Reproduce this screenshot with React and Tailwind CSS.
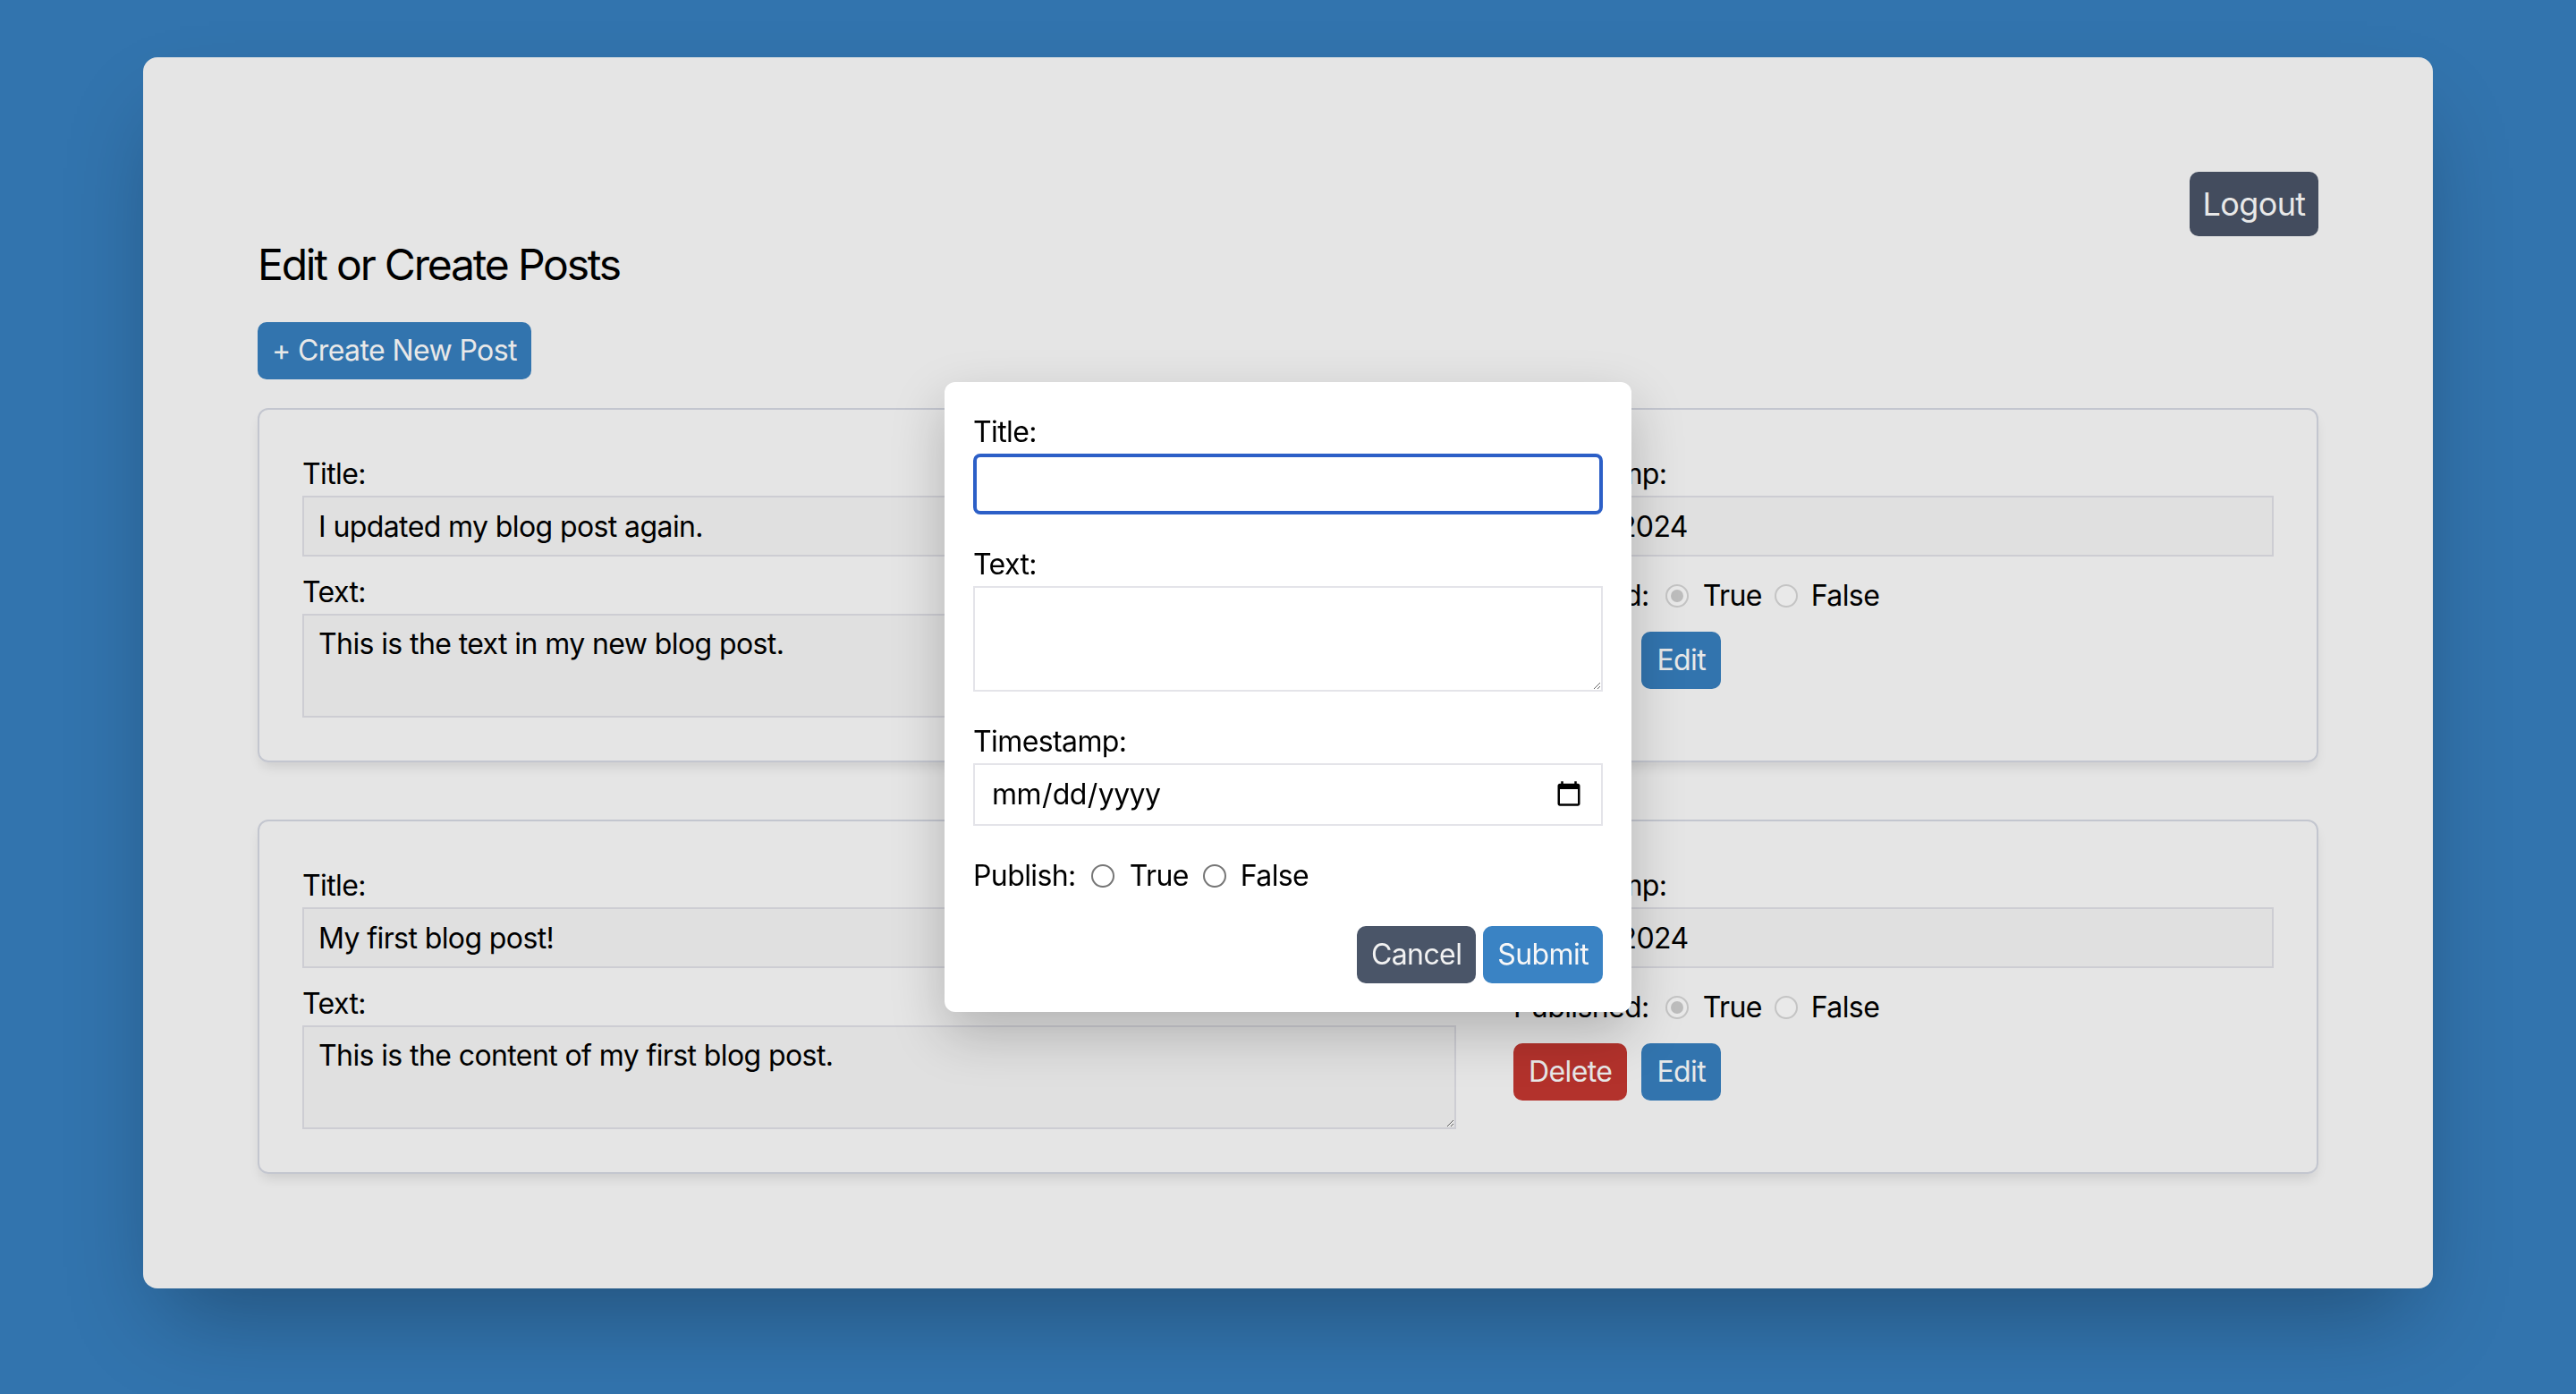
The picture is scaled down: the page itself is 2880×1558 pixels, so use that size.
const posts = [
  {
    id: 1,
    title: "I updated my blog post again.",
    text: "This is the text in my new blog post.",
    timestamp: "03/12/2024",
  },
  {
    id: 2,
    title: "My first blog post!",
    text: "This is the content of my first blog post.",
    timestamp: "03/10/2024",
  },
];

const Radio = ({ checked, disabled }) => (
  <span
    className={
      disabled
        ? "flex h-[26px] w-[26px] shrink-0 items-center justify-center rounded-full border-2 border-[#c4c4c4] bg-[#e9e9e9]"
        : "flex h-[26px] w-[26px] shrink-0 items-center justify-center rounded-full border-2 border-[#767676] bg-white"
    }
  >
    {checked && <span className="h-[14px] w-[14px] rounded-full bg-[#bdbdbd]"></span>}
  </span>
);

const PostCard = ({ post }) => (
  <div className="flex gap-[64px] rounded-[12px] border-2 border-[#c3c6cf] p-[48px] shadow-[0_8px_14px_-4px_rgba(0,0,0,0.12)]">
    <div className="flex w-[1290px] flex-col">
      <label className="leading-[48px]">Title:</label>
      <input
        readOnly
        value={post.title}
        className="h-[68px] border-2 border-[#cdcdd3] bg-[#e0e0e0] px-[16px] text-black outline-none"
      />
      <label className="mt-[16px] leading-[48px]">Text:</label>
      <textarea
        readOnly
        value={post.text}
        className="h-[116px] border-2 border-[#cdcdd3] bg-[#e0e0e0] px-[16px] py-[8px] leading-[48px] text-black outline-none"
      />
    </div>
    <div className="flex flex-1 flex-col">
      <label className="leading-[48px]">Timestamp:</label>
      <input
        readOnly
        value={post.timestamp}
        className="h-[68px] border-2 border-[#cdcdd3] bg-[#e0e0e0] pl-[24px] pr-[16px] text-black outline-none"
      />
      <div className="mt-[20px] flex h-[48px] items-center">
        <span>Published:</span>
        <span className="ml-[18px]"><Radio checked disabled /></span>
        <span className="ml-[16px]">True</span>
        <span className="ml-[14px]"><Radio disabled /></span>
        <span className="ml-[15px]">False</span>
      </div>
      <div className="mt-[16px] flex gap-[16px]">
        <button className="h-[64px] rounded-[10px] bg-[#b3322c] px-[17px] text-[#e8e8e8]">Delete</button>
        <button className="h-[64px] rounded-[10px] bg-[#3274ae] px-[17px] text-[#e8e8e8]">Edit</button>
      </div>
    </div>
  </div>
);

const PostModal = () => (
  <div className="fixed inset-0 flex items-center justify-center">
    <div className="flex w-[768px] flex-col rounded-[12px] bg-white p-[32px] shadow-[0_24px_60px_rgba(0,0,0,0.22)]">
      <label className="leading-[48px]">Title:</label>
      <input className="h-[68px] rounded-[8px] border-[4px] border-[#2c5fc7] bg-white px-[16px] outline-none" />
      <label className="mt-[32px] leading-[48px]">Text:</label>
      <textarea className="h-[118px] border-2 border-[#e4e4e9] bg-white px-[16px] py-[6px] outline-none" />
      <label className="mt-[32px] leading-[48px]">Timestamp:</label>
      <input
        type="date"
        className="h-[70px] border-2 border-[#e4e4e9] bg-white px-[18px] text-black outline-none"
      />
      <div className="mt-[32px] flex h-[48px] items-center">
        <span>Publish:</span>
        <span className="ml-[17px]"><Radio /></span>
        <span className="ml-[17px]">True</span>
        <span className="ml-[16px]"><Radio /></span>
        <span className="ml-[16px]">False</span>
      </div>
      <div className="mt-[32px] flex justify-end gap-[8px]">
        <button className="h-[64px] rounded-[10px] bg-[#4a5568] px-[16px] text-[#f2f2f2]">Cancel</button>
        <button className="h-[64px] rounded-[10px] bg-[#3a83c4] px-[16px] text-[#f7f7f7]">Submit</button>
      </div>
    </div>
  </div>
);

export default function App() {
  return (
    <div className="min-h-screen bg-[#3274ae] pt-[64px] font-['Inter',sans-serif] text-[32px] leading-[48px] tracking-[-0.6px] text-black">
      <div className="mx-auto w-[2560px] rounded-[16px] bg-[#e5e5e5] p-[128px] shadow-[0_50px_100px_-24px_rgba(0,0,0,0.3)]">
        <div className="flex justify-end">
          <button className="h-[72px] w-[144px] rounded-[10px] bg-[#434c5e] text-[36px] leading-[56px] text-[#e8e8e8]">
            Logout
          </button>
        </div>
        <h1 className="text-[48px] leading-[64px] tracking-[-2.2px]">Edit or Create Posts</h1>
        <button className="mt-[32px] h-[64px] rounded-[10px] bg-[#3274ae] px-[16px] text-[#e8e8e8]">
          + Create New Post
        </button>
        <div className="mt-[32px] flex flex-col gap-[64px]">
          {posts.map((post) => (
            <PostCard key={post.id} post={post} />
          ))}
        </div>
      </div>
      <PostModal />
    </div>
  );
}
